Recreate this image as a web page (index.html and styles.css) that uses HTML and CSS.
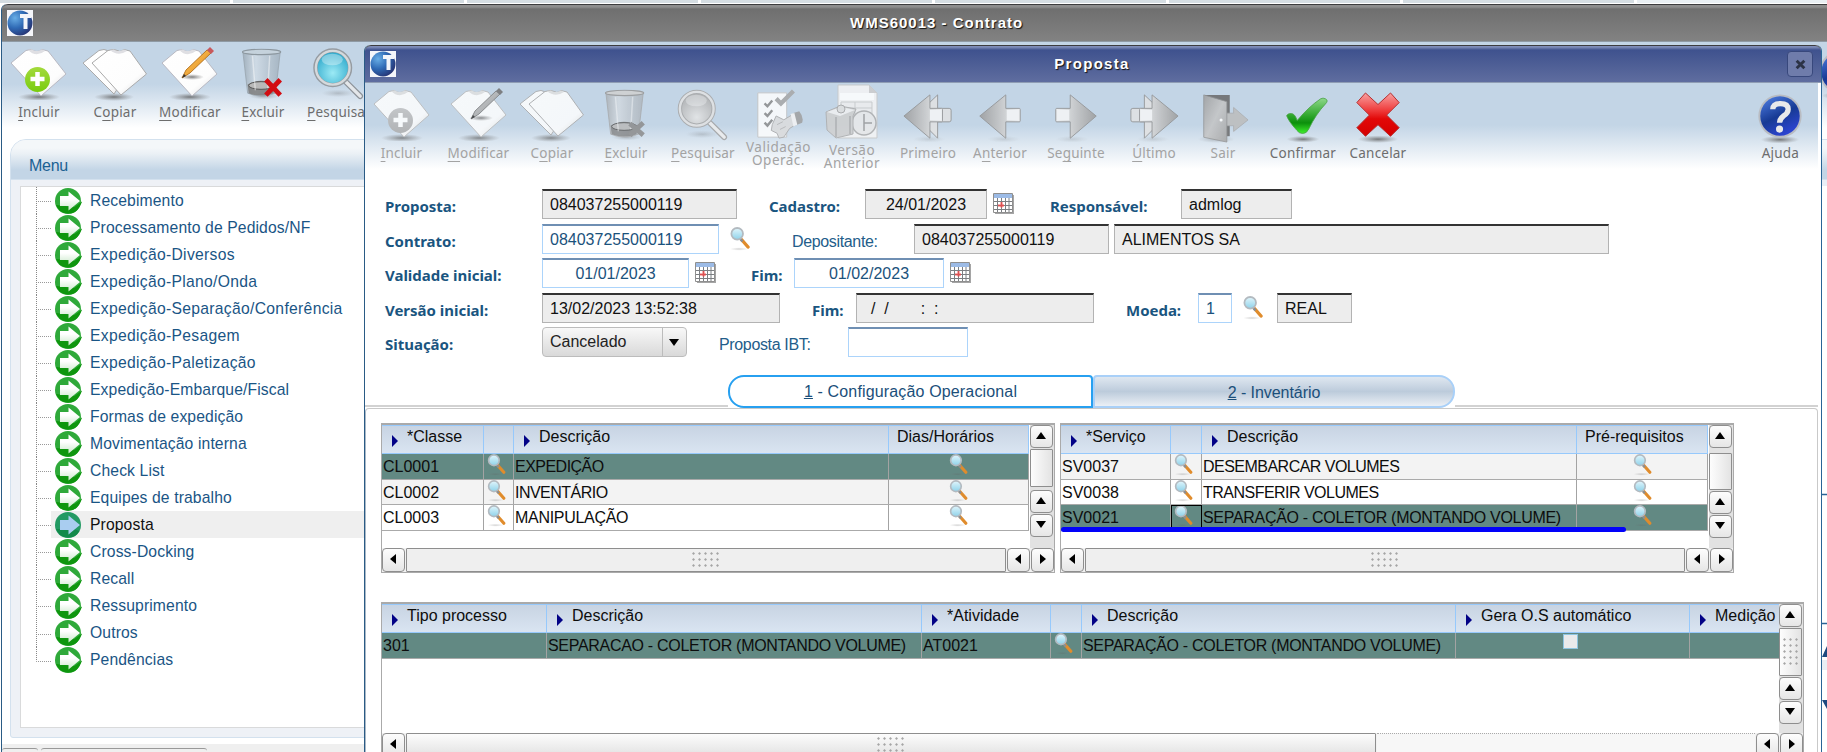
FILE: index.html
```
<!DOCTYPE html>
<html lang="pt-BR">
<head>
<meta charset="utf-8">
<title>WMS60013 - Contrato</title>
<link rel="stylesheet" href="styles.css">
</head>
<body>
<svg class="defs" width="0" height="0" aria-hidden="true">
  <defs>
    <linearGradient id="gPaper" x1="0" y1="0" x2="1" y2="1"><stop offset="0" stop-color="#fff"/><stop offset=".7" stop-color="#fdfdfd"/><stop offset="1" stop-color="#d9d9dc"/></linearGradient>
    <radialGradient id="gShadow"><stop offset="0" stop-color="#555" stop-opacity=".75"/><stop offset="1" stop-color="#777" stop-opacity="0"/></radialGradient>
    <linearGradient id="gLime" x1="0" y1="0" x2="0" y2="1"><stop offset="0" stop-color="#a3da3c"/><stop offset="1" stop-color="#79cc0e"/></linearGradient>
    <linearGradient id="gBin" x1="0" y1="0" x2="1" y2="0"><stop offset="0" stop-color="#8f9da8" stop-opacity=".65"/><stop offset=".35" stop-color="#d5dde4" stop-opacity=".6"/><stop offset="1" stop-color="#8f9da8" stop-opacity=".55"/></linearGradient>
    <radialGradient id="gLens" cx=".5" cy=".65" r=".6"><stop offset="0" stop-color="#9ceaf5"/><stop offset="1" stop-color="#2fa9cc"/></radialGradient>
    <radialGradient id="gLensGray" cx=".5" cy=".75" r=".7"><stop offset="0" stop-color="#e6e6e6"/><stop offset="1" stop-color="#ababab"/></radialGradient>
    <linearGradient id="gArrow" x1="0" y1="0" x2="1" y2="0"><stop offset="0" stop-color="#9a9a9a"/><stop offset=".55" stop-color="#c9c9c9"/><stop offset="1" stop-color="#f4f4f4"/></linearGradient>
    <linearGradient id="gCheck" x1="0" y1="0" x2="0" y2="1"><stop offset="0" stop-color="#8ed88a"/><stop offset=".5" stop-color="#2ea62b"/><stop offset=".7" stop-color="#0c8f0c"/><stop offset="1" stop-color="#3ff02c"/></linearGradient>
    <linearGradient id="gCross" x1="0" y1="0" x2="0" y2="1"><stop offset="0" stop-color="#f9a2a2"/><stop offset=".4" stop-color="#ef3c3c"/><stop offset=".6" stop-color="#e20808"/><stop offset="1" stop-color="#d40000"/></linearGradient>
    <linearGradient id="gHelp" x1=".2" y1="0" x2=".7" y2="1"><stop offset="0" stop-color="#4a78dc"/><stop offset=".5" stop-color="#173a94"/><stop offset="1" stop-color="#2f45d8"/></linearGradient>
    <radialGradient id="gBall" cx=".3" cy=".3" r=".8"><stop offset="0" stop-color="#69aee6"/><stop offset=".5" stop-color="#2f6ab5"/><stop offset="1" stop-color="#26306f"/></radialGradient>
    <linearGradient id="gSmall" x1="0" y1="0" x2="0" y2="1"><stop offset="0" stop-color="#e2f6fc"/><stop offset="1" stop-color="#8ed2ea"/></linearGradient>
    <linearGradient id="gDoor" x1="0" y1="0" x2="1" y2="1"><stop offset="0" stop-color="#9d9d9d"/><stop offset=".5" stop-color="#c4c4c4"/><stop offset="1" stop-color="#a2a2a2"/></linearGradient>
    <linearGradient id="gPencil" x1="0" y1="0" x2="1" y2="1"><stop offset="0" stop-color="#ffd06b"/><stop offset="1" stop-color="#e08310"/></linearGradient>
    <linearGradient id="gGo" x1="0" y1="0" x2="0" y2="1"><stop offset=".4" stop-color="#fff"/><stop offset="1" stop-color="#c9e8c9"/></linearGradient>
  </defs>
  <symbol id="shirt" viewBox="0 0 64 52">
    <ellipse cx="32" cy="49" rx="21" ry="4" fill="url(#gShadow)"/>
    <path d="M19 2.500l5-1q6 4 11 0l6 1.500L59 26 34 48 4 15z" fill="url(#gPaper)" stroke="#b9b9c2" stroke-width="1"/>
    <path d="M21 2q8 8 17 1l-3-1.500q-6 3-10 0z" fill="#dfdfe3"/>
  </symbol>
  <symbol id="i-add" viewBox="0 0 64 54">
    <g transform="translate(0 1)"><use href="#shirt" width="64" height="52"/></g>
    <circle cx="30.500" cy="32.500" r="12.500" fill="url(#gLime)"/>
    <path d="M23.500 32h14M30.500 25v14" stroke="#fff" stroke-width="4.500"/>
  </symbol>
  <symbol id="i-copy" viewBox="0 0 64 54">
    <g transform="translate(0 1)">
    <ellipse cx="31" cy="49" rx="20" ry="4" fill="url(#gShadow)"/>
    <path d="M16 2.500l5-1q5 3 10 0l5 1.500L48 20 31 46 0 15z" fill="url(#gPaper)" stroke="#aaa" stroke-width="1"/>
    <path d="M25 2.500l5-1q6 4 11 0l6 1.500L63.500 26 38 47 9 15z" fill="url(#gPaper)" stroke="#aaa" stroke-width="1"/>
    <path d="M27 2q8 7 17 1l-3-1.500q-6 3-10 0z" fill="#dfdfe3"/>
    </g>
  </symbol>
  <symbol id="i-edit" viewBox="0 0 64 54">
    <g transform="translate(0 1)"><use href="#shirt" width="64" height="52"/></g>
    <ellipse cx="34" cy="30" rx="12" ry="3" fill="url(#gShadow)"/>
    <path d="M24 31l4-8L49 3l4 3-21 20z" fill="url(#gPencil)" stroke="#a8620c" stroke-width=".8"/>
    <path d="M49 3l3-3 4 4-3 3z" fill="#c8585c"/>
    <path d="M24 31l2-4 2 2z" fill="#333"/>
  </symbol>
  <symbol id="bin" viewBox="0 0 48 54">
    <ellipse cx="25" cy="50" rx="16" ry="3.500" fill="url(#gShadow)" opacity=".5"/>
    <path d="M3 4l5 43q14 6 29 0l5-43z" fill="url(#gBin)" stroke="#98a3ac" stroke-width=".8"/>
    <ellipse cx="22.500" cy="4" rx="20" ry="2.800" fill="#c5d2dc" stroke="#8c979f" stroke-width="1.200"/>
    <path d="M8 38q14-8 28 0l-1 9q-13 5-26 0z" fill="#777" opacity=".8"/>
    <ellipse cx="22" cy="39" rx="13" ry="4" fill="#b9b9b9" stroke="#555" stroke-width="1"/>
    <path d="M13 8l3 36M31 8l-2 34" stroke="#fff" stroke-width="1.500" opacity=".45"/>
  </symbol>
  <symbol id="i-bin" viewBox="0 0 48 54">
    <use href="#bin"/>
    <path d="M27 33l15 16M42 33L27 49" stroke="#d20d12" stroke-width="5"/>
  </symbol>
  <symbol id="i-bin-off" viewBox="0 0 48 54">
    <use href="#bin"/>
    <path d="M28 36l14 12M42 35L28 48" stroke="#8b8b8b" stroke-width="5"/>
  </symbol>
  <symbol id="i-find" viewBox="0 0 54 54">
    <ellipse cx="26" cy="47" rx="17" ry="4" fill="url(#gShadow)" opacity=".35"/>
    <path d="M34 35l15 15" stroke="#8d9399" stroke-width="6" stroke-linecap="round"/>
    <path d="M34 35l15 15" stroke="#e4e7ea" stroke-width="3.500" stroke-linecap="round"/>
    <circle cx="20.500" cy="20.500" r="18" fill="url(#gLens)" stroke="#969ca2" stroke-width="4.500"/>
    <circle cx="20.500" cy="20.500" r="17.500" fill="none" stroke="#d5d9dc" stroke-width="2.500"/>
    <ellipse cx="20" cy="12" rx="11" ry="6" fill="#fff" opacity=".35"/>
  </symbol>
  <symbol id="i-find-off" viewBox="0 0 54 54">
    <ellipse cx="26" cy="47" rx="17" ry="4" fill="url(#gShadow)" opacity=".35"/>
    <path d="M34 35l15 15" stroke="#a0a0a0" stroke-width="6" stroke-linecap="round"/>
    <path d="M34 35l15 15" stroke="#ededed" stroke-width="3.500" stroke-linecap="round"/>
    <circle cx="20.500" cy="20.500" r="17.500" fill="url(#gLensGray)" stroke="#a6a6a6" stroke-width="4.500"/>
    <circle cx="20.500" cy="20.500" r="17.500" fill="none" stroke="#e2e2e2" stroke-width="2.500"/>
    <ellipse cx="20" cy="12" rx="11" ry="6" fill="#fff" opacity=".35"/>
  </symbol>
  <symbol id="i-valid" viewBox="0 0 54 52">
    <path d="M5 3h30v46H5z" fill="#fdfdfd" stroke="#c2c2c2"/>
    <path d="M12 14l3 3 5-6M12 24l3 3 5-6M12 34l3 3 5-6" fill="none" stroke="#8c8c8c" stroke-width="2.500"/>
    <path d="M24 9l5 5L42 1" fill="none" stroke="#a6a6a6" stroke-width="4.500"/>
    <path d="M20 36l4-9 8 4 10-6 4 10-8 5-6 9-5 1-2-5-6-3z" fill="#dcdcdc" stroke="#aaa"/>
    <path d="M25 36l6-3M28 41l6-3" stroke="#b4b4b4"/>
    <path d="M42 24l6-2q5 6 3 12l-7 3z" fill="#9f9f9f"/>
    <path d="M39 25l4-1 3 12-4 2z" fill="#f4f4f4"/>
  </symbol>
  <symbol id="i-version" viewBox="0 0 54 56">
    <path d="M13 1h31l8 8v45H13z" fill="#f4f4f4" stroke="#c7c7c7"/>
    <path d="M16 18h31v26H16zM16 24h31M16 30h31M30 18v14" fill="#eee" stroke="#c9c9c9"/>
    <path d="M15 9h34v7H15z" fill="#fff"/>
    <path d="M44 1v8h8z" fill="#ccc"/>
    <circle cx="39" cy="39" r="12" fill="#e9e9e9" stroke="#adadad" stroke-width="1.500"/>
    <path d="M39 30v9h8M39 39v8" stroke="#999" fill="none" stroke-width="1.500"/>
    <path d="M1 28l14-6 16 3-3 7v18l-17 4-9-8z" fill="#cfcfcf" stroke="#acacac"/>
    <path d="M2 28l14-5 14 3-15 6z" fill="#f0f0f0"/>
    <circle cx="16" cy="25" r="4" fill="#dedede" stroke="#a5a5a5"/>
    <path d="M11 33v20M25 32v18" stroke="#aaa" stroke-width="1.500"/>
  </symbol>
  <symbol id="i-prev" viewBox="0 0 54 54">
    <ellipse cx="31" cy="49" rx="17" ry="3.500" fill="url(#gShadow)" opacity=".25"/>
    <path d="M6 25L33 3v14h14q1 0 1 1v12q0 1-1 1H33v17z" fill="url(#gArrow)" stroke="#8f8f8f" stroke-width="1"/>
    <path d="M34 18.500h12.500v11H34z" fill="#f6f6f6"/>
  </symbol>
  <symbol id="i-first" viewBox="0 0 54 54">
    <ellipse cx="28" cy="49" rx="17" ry="3.500" fill="url(#gShadow)" opacity=".25"/>
    <path d="M14 25L37 3v14h12q2 0 2 2v10q0 2-2 2H37v17z" fill="#e2e2e2" stroke="#8f8f8f" stroke-width="1"/>
    <path d="M2 25L29 3v14h12q1 0 1 1v12q0 1-1 1H29v17z" fill="url(#gArrow)" stroke="#8f8f8f" stroke-width="1"/>
    <path d="M29 18.500h12v11H29z" fill="#f6f6f6"/>
  </symbol>
  <symbol id="i-exit" viewBox="0 0 54 54">
    <ellipse cx="20" cy="49" rx="19" ry="4" fill="url(#gShadow)" opacity=".5"/>
    <path d="M8 3h26v43H8z" fill="#686868"/>
    <path d="M28 22h10v-6l15 13-15 12v-6H28z" fill="#bcbcbc" stroke="#a5a5a5" stroke-width=".8"/>
    <path d="M7 3l24 7v42L7 47z" fill="url(#gDoor)" stroke="#888" stroke-width=".8"/>
    <circle cx="25" cy="29" r="1.600" fill="#fff"/>
  </symbol>
  <symbol id="i-ok" viewBox="0 0 54 54">
    <ellipse cx="27" cy="49" rx="17" ry="3.500" fill="url(#gShadow)"/>
    <path transform="translate(-1 3) scale(1.220 .9)" d="M9 24q1-3 4-2.500 3 0 5 8 10-16 20-25 2-1.500 4 0 3 2 0 6Q34 22 28 39q-2 6-5.500 5.500-3 0-5-4Q11 31 9 24z" fill="url(#gCheck)" stroke="#4ba247" stroke-width=".8"/>
  </symbol>
  <symbol id="i-cancel" viewBox="0 0 54 54">
    <ellipse cx="27" cy="49" rx="21" ry="4" fill="url(#gShadow)"/>
    <path d="M5 11L14 1l13 12L40 1l9 10-13 13 13 13-9 9-13-12-13 12-9-9 13-13z" fill="url(#gCross)" stroke="#b32b2b" stroke-width="1"/>
  </symbol>
  <symbol id="i-help" viewBox="0 0 54 54">
    <ellipse cx="27" cy="49.500" rx="20" ry="4" fill="url(#gShadow)"/>
    <circle cx="27" cy="25" r="22.500" fill="#b9bcc2"/>
    <circle cx="27" cy="25" r="20.500" fill="url(#gHelp)"/>
    <path d="M19.500 18q0-6 8-6t8 6q0 4-5 7-4 3-4 7" fill="none" stroke="#e9e9ea" stroke-width="5.500"/>
    <circle cx="26.500" cy="38.500" r="3.700" fill="#e9e9ea"/>
  </symbol>
  <symbol id="i-logo" viewBox="0 0 26 26">
    <path d="M0 0h26v26H0z" fill="#f5f6fa"/>
    <circle cx="13" cy="13" r="12.500" fill="url(#gBall)"/>
    <path d="M13 4h11v4h-3.500v11h-4V8H13z" fill="#f3f5fa"/>
  </symbol>
  <symbol id="i-lens" viewBox="0 0 20 24">
    <ellipse cx="9" cy="22" rx="9" ry="1.700" fill="url(#gShadow)" opacity=".35"/>
    <path d="M11.500 12.500l6.500 7.500" stroke="#e08c2c" stroke-width="3.400" stroke-linecap="round"/>
    <path d="M9.500 11l3 3.500" stroke="#8b8f94" stroke-width="2.500"/>
    <circle cx="7.200" cy="6.800" r="5.800" fill="url(#gSmall)" stroke="#b3bac0" stroke-width="1.800"/>
  </symbol>
  <symbol id="i-cal" viewBox="0 0 21 21">
    <path d="M2 2h19v19H2z" fill="#a5a5a5"/>
    <path d="M.5.500h19v19H.5z" fill="#fff" stroke="#8f8f8f"/>
    <path d="M1 1h18v4H1z" fill="#9cbbe6"/>
    <path d="M1 8.500h18M1 12.500h18M1 16.500h18M4.500 5v14M8.500 5v14M12.500 5v14M16 5v14" stroke="#7b7e82"/>
    <path d="M5 12.500h6M8.500 9v5.500" stroke="#ec4b4b" stroke-width="2" opacity=".85"/>
  </symbol>
  <symbol id="i-go" viewBox="0 0 28 28">
    <circle cx="14" cy="14" r="13" fill="#2fa93a"/>
    <path d="M2 18a13 13 0 0 0 23.500 2l3-6-8 6z" fill="#0e960e"/>
    <path d="M6 9h8.500V4.500l11.500 9.500-11.500 9.500V19H6z" fill="url(#gGo)"/>
  </symbol>
  <symbol id="i-go-on" viewBox="0 0 28 28">
    <circle cx="14" cy="14" r="13" fill="#239a63"/>
    <path d="M2 18a13 13 0 0 0 23.500 2l-6-2z" fill="#128a4b"/>
    <path d="M6 9h8.500V4.500l11.500 9.500-11.500 9.500V19H6z" fill="#a9cdf0"/>
  </symbol>
</svg>

<div class="desk">
  <div class="strip"><i></i><i></i><i></i><i></i><i></i><i></i><i></i><i class="pale"></i></div>

  <section class="win back">
    <header class="bar gray"><svg class="logo"><use href="#i-logo"/></svg><h1>WMS60013 - Contrato</h1></header>
    <div class="tools tools-back">
      <div class="tool"><svg class="w64"><use href="#i-add"/></svg><span><u>I</u>ncluir</span></div>
      <div class="tool"><svg class="w64"><use href="#i-copy"/></svg><span>C<u>o</u>piar</span></div>
      <div class="tool"><svg class="w64"><use href="#i-edit"/></svg><span><u>M</u>odificar</span></div>
      <div class="tool"><svg class="w46"><use href="#i-bin"/></svg><span><u>E</u>xcluir</span></div>
      <div class="tool"><svg class="w52"><use href="#i-find"/></svg><span><u>P</u>esquisar</span></div>
      <div class="tool last"><svg class="w52"><use href="#i-help"/></svg></div>
    </div>
    <div class="panel">
      <h2>Menu</h2>
      <ul class="menu">
        <li><svg><use href="#i-go"/></svg>Recebimento</li>
        <li><svg><use href="#i-go"/></svg>Processamento de Pedidos/NF</li>
        <li class="wide"><svg><use href="#i-go"/></svg>Expedição-Diversos</li>
        <li class="wide"><svg><use href="#i-go"/></svg>Expedição-Plano/Onda</li>
        <li class="wide"><svg><use href="#i-go"/></svg>Expedição-Separação/Conferência</li>
        <li class="wide"><svg><use href="#i-go"/></svg>Expedição-Pesagem</li>
        <li class="wide"><svg><use href="#i-go"/></svg>Expedição-Paletização</li>
        <li><svg><use href="#i-go"/></svg>Expedição-Embarque/Fiscal</li>
        <li><svg><use href="#i-go"/></svg>Formas de expedição</li>
        <li><svg><use href="#i-go"/></svg>Movimentação interna</li>
        <li><svg><use href="#i-go"/></svg>Check List</li>
        <li><svg><use href="#i-go"/></svg>Equipes de trabalho</li>
        <li class="on"><svg><use href="#i-go-on"/></svg>Proposta</li>
        <li><svg><use href="#i-go"/></svg>Cross-Docking</li>
        <li><svg><use href="#i-go"/></svg>Recall</li>
        <li><svg><use href="#i-go"/></svg>Ressuprimento</li>
        <li><svg><use href="#i-go"/></svg>Outros</li>
        <li><svg><use href="#i-go"/></svg>Pendências</li>
      </ul>
    </div>
    <div class="status"><i></i><i></i></div>
  </section>

  <svg class="edge" viewBox="0 0 5 572"><path d="M0 0h5v6H0z" fill="#e9eef6"/><path d="M0 314.500h5M0 443.500h5" stroke="#2a6496" stroke-width="1.500"/><path d="M0 477l5-11v11zM0 520h5v9z" fill="#1f4a80"/><path d="M0 480h5v10H0z" fill="#e9eef4"/></svg>

  <section class="win front">
    <header class="bar blue"><svg class="logo"><use href="#i-logo"/></svg><h1>Proposta</h1><button class="close" aria-label="Fechar"><svg viewBox="0 0 10 10"><path d="M1.500 1.500l7 7M8.500 1.500l-7 7" stroke="#2c3346" stroke-width="2.600"/></svg></button></header>
    <div class="tools tools-front">
      <div class="tool off"><svg class="w64"><use href="#i-add"/></svg><span><u>I</u>ncluir</span></div>
      <div class="tool off"><svg class="w64"><use href="#i-edit"/></svg><span><u>M</u>odificar</span></div>
      <div class="tool off"><svg class="w64"><use href="#i-copy"/></svg><span>C<u>o</u>piar</span></div>
      <div class="tool off"><svg class="w46"><use href="#i-bin-off"/></svg><span><u>E</u>xcluir</span></div>
      <div class="tool off"><svg class="w52"><use href="#i-find-off"/></svg><span><u>P</u>esquisar</span></div>
      <div class="tool off two"><svg class="w52"><use href="#i-valid"/></svg><span>Validação<br>Operac.</span></div>
      <div class="tool off two low"><svg class="w54"><use href="#i-version"/></svg><span>Versão<br>Anterior</span></div>
      <div class="tool off dn4"><svg class="w52"><use href="#i-first"/></svg><span>Primeiro</span></div>
      <div class="tool off dn4"><svg class="w52"><use href="#i-prev"/></svg><span>A<u>n</u>terior</span></div>
      <div class="tool off dn4"><svg class="w52 flip"><use href="#i-prev"/></svg><span>Se<u>g</u>uinte</span></div>
      <div class="tool off dn4"><svg class="w52 flip"><use href="#i-first"/></svg><span><u>Ú</u>ltimo</span></div>
      <div class="tool off dn4"><svg class="w52"><use href="#i-exit"/></svg><span>Sair</span></div>
      <div class="tool dn4"><svg class="w52"><use href="#i-ok"/></svg><span>Confirmar</span></div>
      <div class="tool dn4"><svg class="w52"><use href="#i-cancel"/></svg><span>Cancelar</span></div>
      <div class="tool dn4 help"><svg class="w52"><use href="#i-help"/></svg><span>Ajuda</span></div>
    </div>

    <form class="form">
      <div class="row"><b class="first">Proposta:</b><span class="fld ro w195">084037255000119</span><b class="l-cad">Cadastro:</b><span class="fld ro mid w122">24/01/2023</span><svg class="cal"><use href="#i-cal"/></svg><b class="l-resp">Responsável:</b><span class="fld ro w111">admlog</span></div>
      <div class="row"><b class="first">Contrato:</b><span class="fld w177">084037255000119</span><svg class="lens"><use href="#i-lens"/></svg><label class="l-dep">Depositante:</label><span class="fld ro w195">084037255000119</span><span class="fld ro w495">ALIMENTOS SA</span></div>
      <div class="row"><b class="first">Validade inicial:</b><span class="fld mid w147">01/01/2023</span><svg class="cal"><use href="#i-cal"/></svg><b class="l-fim">Fim:</b><span class="fld mid w150">01/02/2023</span><svg class="cal"><use href="#i-cal"/></svg></div>
      <div class="row"><b class="first">Versão inicial:</b><span class="fld ro w238">13/02/2023 13:52:38</span><b class="l-fim2">Fim:</b><span class="fld ro w238 empty-date"><span>/&nbsp; /</span><span>: &nbsp;:</span></span><b class="l-moeda">Moeda:</b><span class="fld w34">1</span><svg class="lens"><use href="#i-lens"/></svg><span class="fld ro w75">REAL</span></div>
      <div class="row"><b class="first">Situação:</b><span class="sel">Cancelado<i></i></span><label class="l-ibt">Proposta IBT:</label><span class="fld w120"></span></div>
    </form>

    <nav class="tabs"><span class="line"></span><a class="tab act"><u>1</u>&nbsp;- Configuração Operacional</a><a class="tab alt"><u>2</u>&nbsp;- Inventário</a><span class="line"></span></nav>

    <div class="body">
      <div class="pair">
        <div class="grid g1">
          <div class="view">
            <div class="tr th"><span class="s">*Classe</span><span></span><span class="s">Descrição</span><span>Dias/Horários</span></div>
            <div class="tr on"><span>CL0001</span><span><svg><use href="#i-lens"/></svg></span><span class="t">EXPEDIÇÃO</span><span class="c"><svg><use href="#i-lens"/></svg></span></div>
            <div class="tr odd"><span>CL0002</span><span><svg><use href="#i-lens"/></svg></span><span class="t">INVENTÁRIO</span><span class="c"><svg><use href="#i-lens"/></svg></span></div>
            <div class="tr"><span>CL0003</span><span><svg><use href="#i-lens"/></svg></span><span class="t m">MANIPULAÇÃO</span><span class="c"><svg><use href="#i-lens"/></svg></span></div>
          </div>
          <div class="vs"><i class="btn up"></i><i class="thumb"></i><i class="btn up"></i><i class="btn dn"></i></div>
          <div class="hs"><i class="btn lt"></i><i class="thumb"><em></em></i><i class="btn lt"></i><i class="btn rt"></i></div>
        </div>
        <div class="grid g2">
          <div class="view">
            <div class="tr th"><span class="s">*Serviço</span><span></span><span class="s">Descrição</span><span>Pré-requisitos</span></div>
            <div class="tr odd"><span>SV0037</span><span><svg><use href="#i-lens"/></svg></span><span class="t">DESEMBARCAR VOLUMES</span><span class="c"><svg><use href="#i-lens"/></svg></span></div>
            <div class="tr"><span>SV0038</span><span><svg><use href="#i-lens"/></svg></span><span class="t">TRANSFERIR VOLUMES</span><span class="c"><svg><use href="#i-lens"/></svg></span></div>
            <div class="tr on"><span>SV0021</span><span class="focus"><svg><use href="#i-lens"/></svg></span><span class="t m">SEPARAÇÃO - COLETOR (MONTANDO VOLUME)</span><span class="c"><svg><use href="#i-lens"/></svg></span></div>
          </div>
          <div class="vs"><i class="btn up"></i><i class="thumb"></i><i class="btn up"></i><i class="btn dn"></i></div>
          <div class="hs"><i class="btn lt"></i><i class="thumb"><em></em></i><i class="btn lt"></i><i class="btn rt"></i></div>
          <div class="mark"></div>
        </div>
      </div>
      <div class="grid g3">
        <div class="view">
          <div class="tr th"><span class="s">Tipo processo</span><span class="s">Descrição</span><span class="s">*Atividade</span><span></span><span class="s">Descrição</span><span class="s">Gera O.S automático</span><span class="s">Medição</span></div>
          <div class="tr on"><span>301</span><span class="t m">SEPARACAO - COLETOR (MONTANDO VOLUME)</span><span>AT0021</span><span><svg><use href="#i-lens"/></svg></span><span class="t m">SEPARAÇÃO - COLETOR (MONTANDO VOLUME)</span><span class="c"><i class="chk"></i></span><span></span></div>
        </div>
        <div class="vs"><i class="btn up"></i><i class="thumb"><em></em></i><i class="btn up"></i><i class="btn dn"></i></div>
        <div class="hs"><i class="btn lt"></i><i class="thumb"><em></em></i><i class="track"></i><i class="btn lt"></i><i class="btn rt"></i></div>
      </div>
    </div>
  </section>
</div>
</body>
</html>
```
FILE: styles.css
```
* { box-sizing: border-box; }
html, body { margin: 0; height: 752px; overflow: hidden; background: #fff; }
body { font: 16px/20px "Liberation Sans", Arial, sans-serif; color: #000; }
.defs { position: absolute; }
.desk { position: relative; width: 1827px; height: 752px; overflow: hidden; }
h1, h2, ul { margin: 0; padding: 0; font-weight: normal; }

.strip { display: flex; gap: 3px; height: 3px; margin-left: -1px; }
.strip i { flex: 0 0 231px; background: #d5dde2; }
.strip .pale { background: #e9eff3; }

/* windows */
.win { position: absolute; display: flex; flex-direction: column; }
.back { left: 1px; top: 4px; width: 1900px; height: 760px; border-left: 1px solid #2a5b85; background: #fff; border-top-left-radius: 6px; }
.front { left: 364px; top: 45px; width: 1458px; height: 760px; background: #fff; border-left: 1px solid #2a5b85; border-right: 1px solid #2a6496; border-radius: 6px 6px 0 0; }
.bar { display: flex; align-items: center; flex: none; height: 38px; border-top: 1.500px solid #3c3c3e; border-bottom: 1px solid #8f9db4; border-radius: 6px 6px 0 0; padding-left: 5px; }
.bar.gray { background: linear-gradient(#8d8d8d 0 2px, #6f6f6f 4px, #828282 100%); border-bottom-color: #8f9aa4; }
.bar.blue { background: linear-gradient(#7f8db8 0 1px, #3f528e 4px, #5f6d9f 100%); padding-right: 8px; }
.bar .logo { width: 26px; height: 26px; flex: none; }
.bar h1 { color: #fff; font-size: 15px; font-weight: bold; letter-spacing: 1px; text-shadow: 1px 1px 1px #111; white-space: nowrap; }
.gray h1 { margin-left: 817px; }
.blue h1 { flex: 1; text-align: center; margin-right: 16px; padding-left: 17px; letter-spacing: 1.300px; }
.close { width: 26px; height: 26px; border: 1px solid #38487c; border-radius: 4px; background: #6f7cab; display: grid; place-items: center; padding: 0; }
.close svg { width: 11px; height: 11px; }

/* toolbars */
.tools { display: grid; flex: none; height: 93px; background: linear-gradient(#c3d5e6 0 42px, #fff 86px); font: 13.500px/14px "Noto Sans", sans-serif; color: #6d6d6d; }
.tools-back { grid-template-columns: 74px 78px 72px 74px 78px 1fr; width: 1880px; }
.tools-front { grid-template-columns: 73px 81px 66px 82px 72px 79px 68px 84px 60px 92px 64px 74px 86px 64px 1fr; border-right: 3px solid #fff; }
.tool { display: flex; flex-direction: column; align-items: center; }
.tool svg { height: 54px; margin-top: 5px; flex: none; }
.tool span { margin-top: 4px; letter-spacing: .2px; white-space: nowrap; text-align: center; }
.tool.dn4 svg { margin-top: 8px; }
.tool.dn4 span { margin-top: 1px; }
.tool u { text-underline-offset: 3px; }
.tool.last, .tool.help { align-items: flex-end; padding-right: 15px; }
.tool.help { padding-right: 19px; }
.tool.help svg { margin-right: -7px; }
.w46 { width: 46px; } .w52 { width: 52px; } .w54 { width: 54px; } .w64 { width: 64px; }
.off { color: #a3a3a3; }
.off svg { filter: grayscale(1) opacity(.85); }
.tool.two span { line-height: 12.500px; margin-top: -1px; letter-spacing: .5px; }
.tool.two.low svg { margin-top: 1px; height: 56px; }
.tool.two.low span { margin-top: 4px; }
.flip { transform: scaleX(-1); }

/* menu */
.panel { flex: none; margin: 4px 0 0 8px; width: 1880px; height: 599px; border: 1px solid #d3e1ee; background: #eef1f6; border-radius: 16px 0 0 3px; overflow: hidden; padding: 0 0 0 9px; }
.panel h2 { height: 40px; margin-left: -9px; padding: 16px 0 0 18px; font-size: 16px; letter-spacing: -.3px; color: #1b6193; background: linear-gradient(#f4f7f9 0 8px, #eaf0f5 14px, #c3d5e6 30px 100%); border-bottom: 1px solid #d3e1ee; }
.menu { list-style: none; margin-top: 6px; border: 1px solid #d9dadb; background: #fff; height: 542px; color: #1a5585; }
.menu li { position: relative; display: flex; align-items: center; height: 27.040px; padding-left: 33px; gap: 8px; white-space: nowrap; letter-spacing: .12px; font-size: 15.700px; }
.menu .wide { letter-spacing: .3px; }
.menu li svg { width: 28px; height: 28px; margin: 0; position: relative; z-index: 1; }
.menu li::before { content: ""; position: absolute; left: 15px; top: 0; width: 14px; height: 14px; border-bottom: 1px dotted #999; border-left: 1px dotted #888; }
.menu li:not(:last-child)::after { content: ""; position: absolute; left: 15px; top: 14px; height: 13px; border-left: 1px dotted #888; }
.menu .on { color: #111; background: linear-gradient(90deg, #fff 30px, #efefef 30px); }
.status { flex: none; margin-top: 6px; height: 16px; background: #efefef; display: flex; gap: 3px; padding-top: 4px; }
.status i { width: 36px; border-top: 1.500px solid #999; border-radius: 3px; }
.status i + i { width: 166px; }
.edge { position: absolute; left: 1822px; top: 180px; width: 5px; height: 572px; background: #fff; }

/* form */
.form { flex: none; display: flex; flex-direction: column; gap: 4.500px; padding: 13px 0 0 20px; color: #1b527c; }
.row { display: flex; height: 30px; align-items: flex-start; white-space: nowrap; }
.row b { font: bold 15px/20px "Noto Sans", sans-serif; padding-top: 7px; color: #1a5580; letter-spacing: -.02px; }
.row label { padding-top: 8px; letter-spacing: -.35px; color: #235d8a; }
.first { width: 157px; }
.fld { flex: none; height: 30px; padding: 4px 7px 0; border: 1px solid #acd4fb; border-top: 2px solid #6f8fb3; }
.fld.ro { background: #ededed; border: 1px solid #b3b3b3; border-top: 2px solid #333; color: #111; }
.fld.mid { text-align: center; }
.w195 { width: 195px; } .w122 { width: 122px; } .w111 { width: 111px; } .w177 { width: 177px; } .w495 { width: 495px; margin-left: 5px; }
.w147 { width: 147px; } .w150 { width: 150px; } .w238 { width: 238px; } .w34 { width: 34px; } .w75 { width: 75px; } .w120 { width: 120px; }
.cal { width: 21px; height: 21px; margin: 4px 0 0 6px; flex: none; }
.lens { width: 20px; height: 24px; margin: 3px 0 0 11px; flex: none; }
.lens + .fld { margin-left: 14px; }
.l-cad { margin-left: 32px; width: 96px; }
.l-resp { margin-left: 36px; width: 131px; }
.l-dep { margin-left: 42px; width: 122px; }
.l-fim { margin-left: 35px; width: 43px; }
.l-fim2 { margin-left: 32px; width: 44px; }
.l-moeda { margin-left: 32px; width: 72px; }
.l-ibt { margin-left: 32px; width: 129px; }
.empty-date { display: flex; gap: 32px; padding-left: 14px; }
.sel { position: relative; width: 145px; height: 30px; border: 1px solid #bcbcbc; border-radius: 4px; background: linear-gradient(#f8f8f8, #d9d9d9); padding: 4px 7px; color: #222; }
.sel i { position: absolute; right: 0; top: 0; width: 24px; height: 28px; border-left: 1px solid #bcbcbc; }
.sel i::after { content: ""; position: absolute; left: 6px; top: 11px; border: 5.500px solid transparent; border-top: 7px solid #000; border-bottom: 0; }

/* tabs */
.tabs { flex: none; display: flex; margin-top: 18px; height: 33px; width: 1453px; }
.tabs .line { flex: 1; align-self: flex-end; height: 2px; background: #d2d2d2; margin-bottom: 1px; }
.tab { height: 33px; width: 365px; border: 2px solid #27a0f0; border-radius: 16px 4px 0 16px; color: #1b4f7a; text-align: center; padding-top: 5px; letter-spacing: .15px; }
.tab.act { background: #fff; }
.tab.alt { width: 362px; border: 2px solid #a9d0f8; border-radius: 4px 16px 16px 0; background: linear-gradient(#dfe7f0, #bccbdb 50%, #ebeff5); padding-top: 6px; letter-spacing: -.05px; }

/* grids */
.body { width: 1453px; height: 400px; border: 1px solid #c9c9c9; border-left-color: #aab8c6; border-radius: 4px; padding: 14px 0 0 15px; }
.pair { display: flex; gap: 5px; }
.grid { position: relative; display: grid; grid-template-columns: 1fr 24px; grid-template-rows: 1fr 24px; border: 1px solid #aaa; border-top: 2px solid #aaa; }
.g1 { width: 674px; height: 150px; } .g2 { width: 674px; height: 150px; }
.g3 { width: 1423px; height: 156px; margin-top: 29px; }
.view { overflow: hidden; }
.tr { display: grid; height: 25.500px; border-bottom: 1px solid #aaa; color: #0d0d0d; }
.g1 .tr { grid-template-columns: 102px 30px 375px 140px; width: 647px; }
.g2 .tr { grid-template-columns: 110px 31px 375px 131px; width: 647px; }
.g3 .tr { grid-template-columns: 165px 375px 129px 31px 374px 234px 100px; width: 1408px; }
.tr > span { border-right: 1px solid #a3a3a3; padding: 3px 0 0 1px; white-space: nowrap; overflow: hidden; height: 100%; }
.tr .t { letter-spacing: -.52px; }
.tr .m { letter-spacing: -.3px; }
.tr svg { width: 19px; height: 22px; display: block; margin: -3px 0 0 2px; }
.tr .c { padding-left: 0; }
.tr .c svg { margin-left: auto; margin-right: auto; }
.tr.on { background: #628983; }
.tr.odd { background: #f3f3f3; }
.tr.th { height: 29px; border-bottom: 0; background: linear-gradient(#c7d3e2, #dae5f2); }
.tr.th > span { border: 1.500px solid #96c9fc; border-left: 0; padding: 1px 0 0 8px; }
.tr.th .s::before { content: ""; display: inline-block; border: 6px solid transparent; border-left: 6.500px solid #020286; border-right: 0; margin: 0 9px -5px 2px; }
.focus { outline: 1.500px solid #000; outline-offset: -1.500px; }
.chk { display: block; width: 15px; height: 15px; margin: -2px auto 0; position: relative; left: -2px; border: 1px solid #8ec5e0; background: #e9eaeb; }
.mark { position: absolute; left: 0; top: 102px; width: 565px; height: 5px; border-radius: 3px; background: #0202fa; }

/* scrollbars */
.vs { display: flex; flex-direction: column; gap: 1px; background: #e2e2e2; }
.vs .btn, .vs .thumb { width: 23px; margin-left: 0; }
.btn, .thumb { position: relative; flex: none; border: 1.500px solid #8e8e8e; border-radius: 4px; background: linear-gradient(#fdfdfd, #e6e6e6); }
.vs .btn { height: 23px; }
.vs .thumb { height: 38px; border-radius: 1px; margin-bottom: 2px; background: linear-gradient(90deg, #fdfdfd, #e3e3e3); }
.g2 .vs .thumb { margin: 4px 0 0; height: 37px; }
.g3 .vs .thumb { height: 48px; margin-bottom: 0; display: grid; place-items: center; }
.btn::after { content: ""; position: absolute; left: 5px; top: 6px; border: 5px solid transparent; }
.up::after { border-bottom: 7px solid #000; border-top: 0; }
.dn::after { border-top: 7px solid #000; border-bottom: 0; }
.lt::after { border-right: 6px solid #000; border-left: 0; top: 5px; left: 7px; }
.rt::after { border-left: 6px solid #000; border-right: 0; top: 5px; left: 8px; }
.hs { grid-column: 1 / 3; display: flex; gap: 1px; background: #f2f2f2; height: 24px; }
.hs .btn { width: 23px; height: 24px; }
.hs .thumb { flex: 1; border-radius: 1px; background: #efefef; display: grid; place-items: center; }
em { width: 28px; height: 16px; background: radial-gradient(circle at 1.500px 1.500px, #a5a5a5 .8px, transparent 1.500px) 0 0 / 6px 6px; }
.vs em { width: 16px; height: 28px; }
.g3 .hs .thumb { flex: none; width: 970px; background: linear-gradient(#fcfcfc, #e2e2e2); }
.track { flex: 1; border-top: 1px dotted #aaa; background: #f7f7f7; }
```
